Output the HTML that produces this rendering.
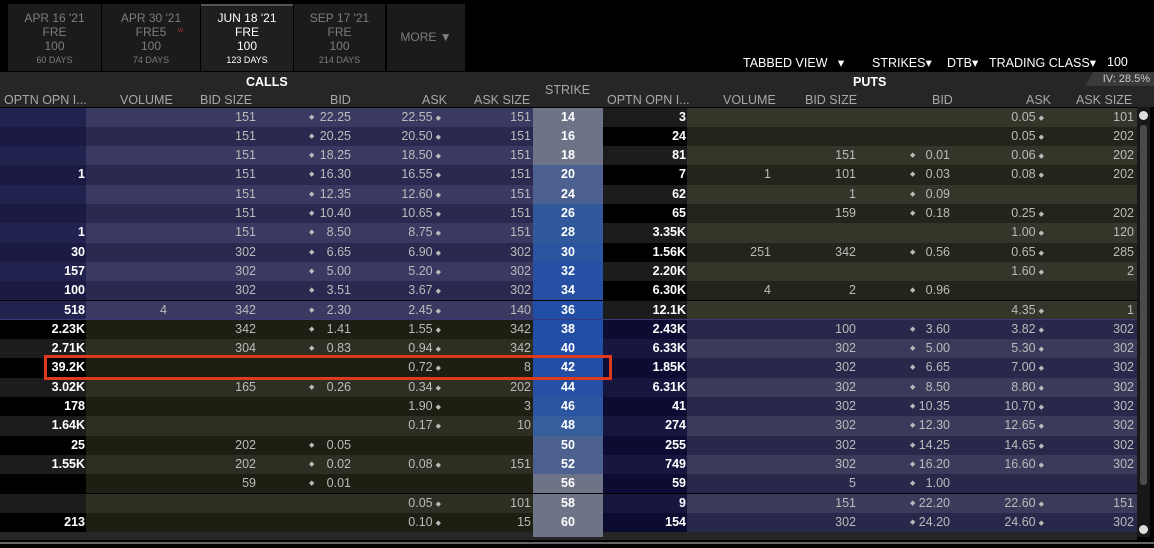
<!DOCTYPE html>
<html><head><meta charset="utf-8"><style>
*{margin:0;padding:0;box-sizing:border-box}
body{width:1154px;height:548px;background:#000;font-family:"Liberation Sans",sans-serif;position:relative;overflow:hidden;color:#bbb}
.tab{position:absolute;top:4px;height:67px;background:#1b1b1b;text-align:center;color:#7d7d7d;font-size:12px;line-height:14px;padding-top:7px}
.tab small{font-size:9px;display:block}
.tab.act{background:#1f1f1f;color:#fff;border-top:2px solid #555;padding-top:5px}
.hdr{position:absolute;top:72px;left:0;width:1154px;height:35px;background:#262626}
.h{position:absolute;font-size:12.5px;color:#a8a8a8;top:93px}
.top{position:absolute;top:55px;font-size:12.5px;color:#fff}
.row{position:absolute;left:0;width:1137px;height:19.3px;display:grid;grid-template-columns:86px 87px 85px 100px 83px 92px 70px 84px 87px 85px 95px 90px 91px;font-size:12.5px;line-height:19.3px}
.row div{text-align:right;position:relative;white-space:nowrap}
.row i{position:absolute;left:51px;font-style:normal;font-size:7px;top:0}
.row b{font-weight:normal;font-size:7px;padding-left:3px;vertical-align:1px}
.o{color:#fff;font-weight:bold;padding-right:1px}
.s{text-align:center!important;color:#fff;font-weight:bold}
.c1{padding-right:6px}.c2{padding-right:2px}.c3{padding-right:7px}.c5{padding-right:2px}
.p1{padding-right:3px}.p3{padding-right:4px}.p5{padding-right:1px}
</style></head><body>
<div class="tab" style="left:8px;width:93px">APR 16 '21<br>FRE<br>100<small>60 DAYS</small></div>
<div class="tab" style="left:102px;width:98px">APR 30 '21<br>FRE5<br>100<small>74 DAYS</small><span style="position:absolute;left:76px;top:20px;color:#a33;font-size:7px">w</span></div>
<div class="tab act" style="left:201px;width:92px">JUN 18 '21<br>FRE<br>100<small>123 DAYS</small></div>
<div class="tab" style="left:294px;width:91px">SEP 17 '21<br>FRE<br>100<small>214 DAYS</small></div>
<div class="tab" style="left:387px;width:78px;padding-top:26px">MORE &#9660;</div>
<div class="top" style="left:743px">TABBED VIEW &nbsp; &#9662;</div>
<div class="top" style="left:872px">STRIKES&#9662;</div>
<div class="top" style="left:947px">DTB&#9662;</div>
<div class="top" style="left:989px">TRADING CLASS&#9662;</div>
<div class="top" style="left:1107px">100</div>
<div class="hdr"></div>
<div style="position:absolute;left:1085px;top:72px;width:69px;height:14px;background:#3a3a3a;clip-path:polygon(8px 0,100% 0,100% 100%,0 100%);font-size:11px;color:#ccc;text-align:right;padding-right:4px;line-height:14px">IV: 28.5%</div>
<div class="h" style="left:246px;top:75px;color:#fff;font-weight:bold">CALLS</div>
<div class="h" style="left:853px;top:75px;color:#fff;font-weight:bold">PUTS</div>
<div class="h" style="left:545px;top:83px">STRIKE</div>
<div class="h" style="left:4px">OPTN OPN I...</div>
<div class="h" style="left:120px">VOLUME</div>
<div class="h" style="left:200px">BID SIZE</div>
<div class="h" style="left:330px">BID</div>
<div class="h" style="left:422px">ASK</div>
<div class="h" style="left:474px">ASK SIZE</div>
<div class="h" style="left:607px">OPTN OPN I...</div>
<div class="h" style="left:723px">VOLUME</div>
<div class="h" style="left:805px">BID SIZE</div>
<div class="h" style="left:932px">BID</div>
<div class="h" style="left:1026px">ASK</div>
<div class="h" style="left:1076px">ASK SIZE</div>
<div style="position:absolute;left:0;top:532px;width:1137px;height:8px;background:#262626"></div>
<div style="position:absolute;left:0;top:542px;width:1154px;height:2px;background:#666"></div>
<div style="position:absolute;left:1137px;top:107px;width:13px;height:430px;background:#181818"></div>
<div style="position:absolute;left:1140px;top:125px;width:7px;height:360px;background:#4a4a4a;border-radius:3px"></div>
<div style="position:absolute;left:1139px;top:111px;width:9px;height:9px;background:#ddd;border-radius:50%"></div>
<div style="position:absolute;left:1139px;top:525px;width:9px;height:9px;background:#ddd;border-radius:50%"></div>
<style>
.B0{background:linear-gradient(90deg,#22224e 86px,#393961 86px,#393961 533px,var(--s) 533px,var(--s) 603px,#1c1c1c 603px,#1c1c1c 687px,#35352a 687px)}
.B1{background:linear-gradient(90deg,#1a1a42 86px,#2a2a50 86px,#2a2a50 533px,var(--s) 533px,var(--s) 603px,#000 603px,#000 687px,#24241a 687px)}
.O0{background:linear-gradient(90deg,#1c1c1c 86px,#2e2e22 86px,#2e2e22 533px,var(--s) 533px,var(--s) 603px,#16163e 603px,#16163e 687px,#3a3a5a 687px)}
.O1{background:linear-gradient(90deg,#000 86px,#1e1e12 86px,#1e1e12 533px,var(--s) 533px,var(--s) 603px,#0c0c32 603px,#0c0c32 687px,#28284a 687px)}
</style>
<div class="row B0" style="top:107.5px;--s:#6e7488"><div class="o"></div><div class="c1"></div><div class="c2">151</div><div class="c3"><i>◆</i>22.25</div><div>22.55<b>◆</b></div><div class="c5">151</div><div class="s">14</div><div class="o">3</div><div class="p1"></div><div class="p1"></div><div class="p3"></div><div>0.05<b>◆</b></div><div class="p5">101</div></div>
<div class="row B1" style="top:126.8px;--s:#6e7488"><div class="o"></div><div class="c1"></div><div class="c2">151</div><div class="c3"><i>◆</i>20.25</div><div>20.50<b>◆</b></div><div class="c5">151</div><div class="s">16</div><div class="o">24</div><div class="p1"></div><div class="p1"></div><div class="p3"></div><div>0.05<b>◆</b></div><div class="p5">202</div></div>
<div class="row B0" style="top:146.1px;--s:#6e7488"><div class="o"></div><div class="c1"></div><div class="c2">151</div><div class="c3"><i>◆</i>18.25</div><div>18.50<b>◆</b></div><div class="c5">151</div><div class="s">18</div><div class="o">81</div><div class="p1"></div><div class="p1">151</div><div class="p3"><i>◆</i>0.01</div><div>0.06<b>◆</b></div><div class="p5">202</div></div>
<div class="row B1" style="top:165.4px;--s:#4c6190"><div class="o">1</div><div class="c1"></div><div class="c2">151</div><div class="c3"><i>◆</i>16.30</div><div>16.55<b>◆</b></div><div class="c5">151</div><div class="s">20</div><div class="o">7</div><div class="p1">1</div><div class="p1">101</div><div class="p3"><i>◆</i>0.03</div><div>0.08<b>◆</b></div><div class="p5">202</div></div>
<div class="row B0" style="top:184.7px;--s:#4c6190"><div class="o"></div><div class="c1"></div><div class="c2">151</div><div class="c3"><i>◆</i>12.35</div><div>12.60<b>◆</b></div><div class="c5">151</div><div class="s">24</div><div class="o">62</div><div class="p1"></div><div class="p1">1</div><div class="p3"><i>◆</i>0.09</div><div></div><div class="p5"></div></div>
<div class="row B1" style="top:204px;--s:#30589a"><div class="o"></div><div class="c1"></div><div class="c2">151</div><div class="c3"><i>◆</i>10.40</div><div>10.65<b>◆</b></div><div class="c5">151</div><div class="s">26</div><div class="o">65</div><div class="p1"></div><div class="p1">159</div><div class="p3"><i>◆</i>0.18</div><div>0.25<b>◆</b></div><div class="p5">202</div></div>
<div class="row B0" style="top:223.3px;--s:#30589a"><div class="o">1</div><div class="c1"></div><div class="c2">151</div><div class="c3"><i>◆</i>8.50</div><div>8.75<b>◆</b></div><div class="c5">151</div><div class="s">28</div><div class="o">3.35K</div><div class="p1"></div><div class="p1"></div><div class="p3"></div><div>1.00<b>◆</b></div><div class="p5">120</div></div>
<div class="row B1" style="top:242.6px;--s:#2b55a0"><div class="o">30</div><div class="c1"></div><div class="c2">302</div><div class="c3"><i>◆</i>6.65</div><div>6.90<b>◆</b></div><div class="c5">302</div><div class="s">30</div><div class="o">1.56K</div><div class="p1">251</div><div class="p1">342</div><div class="p3"><i>◆</i>0.56</div><div>0.65<b>◆</b></div><div class="p5">285</div></div>
<div class="row B0" style="top:261.9px;--s:#2550a3"><div class="o">157</div><div class="c1"></div><div class="c2">302</div><div class="c3"><i>◆</i>5.00</div><div>5.20<b>◆</b></div><div class="c5">302</div><div class="s">32</div><div class="o">2.20K</div><div class="p1"></div><div class="p1"></div><div class="p3"></div><div>1.60<b>◆</b></div><div class="p5">2</div></div>
<div class="row B1" style="top:281.2px;--s:#2550a3"><div class="o">100</div><div class="c1"></div><div class="c2">302</div><div class="c3"><i>◆</i>3.51</div><div>3.67<b>◆</b></div><div class="c5">302</div><div class="s">34</div><div class="o">6.30K</div><div class="p1">4</div><div class="p1">2</div><div class="p3"><i>◆</i>0.96</div><div></div><div class="p5"></div></div>
<div class="row B0" style="top:300.5px;--s:#234ea5"><div class="o">518</div><div class="c1">4</div><div class="c2">342</div><div class="c3"><i>◆</i>2.30</div><div>2.45<b>◆</b></div><div class="c5">140</div><div class="s">36</div><div class="o">12.1K</div><div class="p1"></div><div class="p1"></div><div class="p3"></div><div>4.35<b>◆</b></div><div class="p5">1</div></div>
<div class="row O1" style="top:319.8px;--s:#234ea5"><div class="o">2.23K</div><div class="c1"></div><div class="c2">342</div><div class="c3"><i>◆</i>1.41</div><div>1.55<b>◆</b></div><div class="c5">342</div><div class="s">38</div><div class="o">2.43K</div><div class="p1"></div><div class="p1">100</div><div class="p3"><i>◆</i>3.60</div><div>3.82<b>◆</b></div><div class="p5">302</div></div>
<div class="row O0" style="top:339.1px;--s:#234ea5"><div class="o">2.71K</div><div class="c1"></div><div class="c2">304</div><div class="c3"><i>◆</i>0.83</div><div>0.94<b>◆</b></div><div class="c5">342</div><div class="s">40</div><div class="o">6.33K</div><div class="p1"></div><div class="p1">302</div><div class="p3"><i>◆</i>5.00</div><div>5.30<b>◆</b></div><div class="p5">302</div></div>
<div class="row O1" style="top:358.4px;--s:#234ea5"><div class="o">39.2K</div><div class="c1"></div><div class="c2"></div><div class="c3"></div><div>0.72<b>◆</b></div><div class="c5">8</div><div class="s">42</div><div class="o">1.85K</div><div class="p1"></div><div class="p1">302</div><div class="p3"><i>◆</i>6.65</div><div>7.00<b>◆</b></div><div class="p5">302</div></div>
<div class="row O0" style="top:377.7px;--s:#2550a3"><div class="o">3.02K</div><div class="c1"></div><div class="c2">165</div><div class="c3"><i>◆</i>0.26</div><div>0.34<b>◆</b></div><div class="c5">202</div><div class="s">44</div><div class="o">6.31K</div><div class="p1"></div><div class="p1">302</div><div class="p3"><i>◆</i>8.50</div><div>8.80<b>◆</b></div><div class="p5">302</div></div>
<div class="row O1" style="top:397px;--s:#2b55a0"><div class="o">178</div><div class="c1"></div><div class="c2"></div><div class="c3"></div><div>1.90<b>◆</b></div><div class="c5">3</div><div class="s">46</div><div class="o">41</div><div class="p1"></div><div class="p1">302</div><div class="p3"><i>◆</i>10.35</div><div>10.70<b>◆</b></div><div class="p5">302</div></div>
<div class="row O0" style="top:416.3px;--s:#365d9c"><div class="o">1.64K</div><div class="c1"></div><div class="c2"></div><div class="c3"></div><div>0.17<b>◆</b></div><div class="c5">10</div><div class="s">48</div><div class="o">274</div><div class="p1"></div><div class="p1">302</div><div class="p3"><i>◆</i>12.30</div><div>12.65<b>◆</b></div><div class="p5">302</div></div>
<div class="row O1" style="top:435.6px;--s:#4c6190"><div class="o">25</div><div class="c1"></div><div class="c2">202</div><div class="c3"><i>◆</i>0.05</div><div></div><div class="c5"></div><div class="s">50</div><div class="o">255</div><div class="p1"></div><div class="p1">302</div><div class="p3"><i>◆</i>14.25</div><div>14.65<b>◆</b></div><div class="p5">302</div></div>
<div class="row O0" style="top:454.9px;--s:#4c6190"><div class="o">1.55K</div><div class="c1"></div><div class="c2">202</div><div class="c3"><i>◆</i>0.02</div><div>0.08<b>◆</b></div><div class="c5">151</div><div class="s">52</div><div class="o">749</div><div class="p1"></div><div class="p1">302</div><div class="p3"><i>◆</i>16.20</div><div>16.60<b>◆</b></div><div class="p5">302</div></div>
<div class="row O1" style="top:474.2px;--s:#6e7488"><div class="o"></div><div class="c1"></div><div class="c2">59</div><div class="c3"><i>◆</i>0.01</div><div></div><div class="c5"></div><div class="s">56</div><div class="o">59</div><div class="p1"></div><div class="p1">5</div><div class="p3"><i>◆</i>1.00</div><div></div><div class="p5"></div></div>
<div class="row O0" style="top:493.5px;--s:#6e7488"><div class="o"></div><div class="c1"></div><div class="c2"></div><div class="c3"></div><div>0.05<b>◆</b></div><div class="c5">101</div><div class="s">58</div><div class="o">9</div><div class="p1"></div><div class="p1">151</div><div class="p3"><i>◆</i>22.20</div><div>22.60<b>◆</b></div><div class="p5">151</div></div>
<div class="row O1" style="top:512.8px;--s:#6e7488"><div class="o">213</div><div class="c1"></div><div class="c2"></div><div class="c3"></div><div>0.10<b>◆</b></div><div class="c5">15</div><div class="s">60</div><div class="o">154</div><div class="p1"></div><div class="p1">302</div><div class="p3"><i>◆</i>24.20</div><div>24.60<b>◆</b></div><div class="p5">302</div></div>
<div style="position:absolute;left:0;top:319px;width:1137px;height:1px;background:#3a3a7a"></div>
<div style="position:absolute;left:533px;top:532px;width:70px;height:5px;background:#6e7488"></div>
<div style="position:absolute;left:44px;top:355px;width:568px;height:25px;border:3px solid #e03a1e"></div>
</body></html>
